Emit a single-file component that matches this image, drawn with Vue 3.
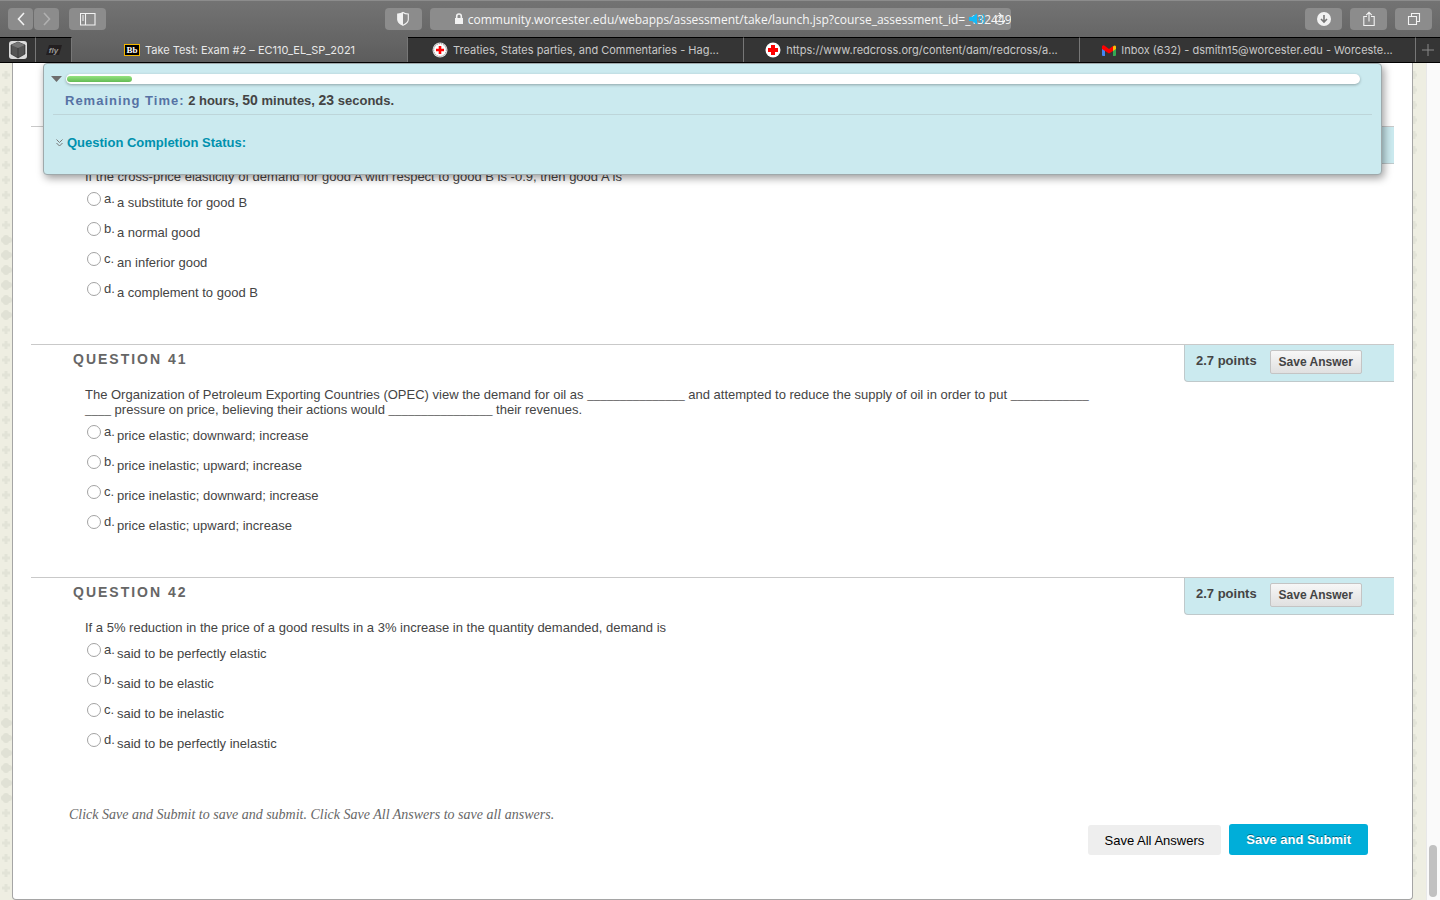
<script setup>
import { ref } from "vue";

const url = ref("community.worcester.edu/webapps/assessment/take/launch.jsp?course_assessment_id=_132449_1");
const answers = ref({});

const tabs = [
  { icon: "bb", title: "Take Test: Exam #2 – EC110_EL_SP_2021", active: true },
  { icon: "seal", title: "Treaties, States parties, and Commentaries - Hag..." },
  { icon: "cross", title: "https://www.redcross.org/content/dam/redcross/a..." },
  { icon: "gmail", title: "Inbox (632) - dsmith15@worcester.edu - Worceste..." },
];

// numbers in a prompt are blanks of that many underscores
const questions = [
  {
    number: 40,
    prompt: ["If the cross-price elasticity of demand for good A with respect to good B is -0.9, then good A is"],
    options: ["a substitute for good B", "a normal good", "an inferior good", "a complement to good B"],
  },
  {
    number: 41,
    prompt: [
      "The Organization of Petroleum Exporting Countries (OPEC) view the demand for oil as ",
      15,
      " and attempted to reduce the supply of oil in order to put ",
      12,
      4,
      " pressure on price, believing their actions would ",
      16,
      " their revenues.",
    ],
    options: [
      "price elastic; downward; increase",
      "price inelastic; upward; increase",
      "price inelastic; downward; increase",
      "price elastic; upward; increase",
    ],
  },
  {
    number: 42,
    prompt: ["If a 5% reduction in the price of a good results in a 3% increase in the quantity demanded, demand is"],
    options: [
      "said to be perfectly elastic",
      "said to be elastic",
      "said to be inelastic",
      "said to be perfectly inelastic",
    ],
  },
];

const letters = ["a", "b", "c", "d"];

// evenly spaced marks from one y to another
const run = (from, to) => {
  const list = [];
  for (let y = from; y <= to; y += 15) list.push(y);
  return list;
};

const leftSmall = [...run(12, 162), ...run(267, 477), ...run(495, 645), ...run(750, 825)];
const leftLarge = [...run(177, 252), ...run(660, 735)];
const rightSmall = [...run(12, 87), ...run(132, 312), ...run(403, 478), ...run(495, 570), ...run(615, 810)];
</script>

<template>
  <div class="window">
    <header class="toolbar">
      <div class="side">
        <div class="nav">
          <button class="tool small" aria-label="Back">
            <svg width="10" height="14" viewBox="0 0 10 14"><path d="M8 1 2.500 7 8 13" /></svg>
          </button>
          <button class="tool small dim" aria-label="Forward">
            <svg width="10" height="14" viewBox="0 0 10 14"><path d="M2 1 7.500 7 2 13" /></svg>
          </button>
        </div>
        <button class="tool" aria-label="Sidebar">
          <svg width="16" height="13" viewBox="0 0 16 13">
            <path class="thin" d="M.5.5h14.500v11.500H.5zM5.500.5v11.500M2 3h2M2 5h2M2 7h2" />
          </svg>
        </button>
      </div>
      <div class="middle">
        <button class="tool" aria-label="Privacy report">
          <svg width="14" height="16" viewBox="0 0 14 16">
            <path class="thin" d="M7 1.500C5.500 2.700 3.500 3 1.700 3v5.500c0 2.800 2.500 4.500 5.300 5.800 2.800-1.300 5.300-3 5.300-5.800V3C10.500 3 8.500 2.700 7 1.500z" />
            <path class="solid" d="M7 1.500v12.800C4.200 13 1.700 11.300 1.700 8.500V3C3.500 3 5.500 2.700 7 1.500z" />
          </svg>
        </button>
        <div class="address">
          <svg class="lock" width="10" height="12" viewBox="0 0 10 12">
            <path class="solid" d="M1 5h8v6H1z" />
            <path d="M2.700 5.500V3.300a2.300 2.300 0 0 1 4.600 0v2.200" />
          </svg>
          <input v-model="url" type="text" aria-label="Address" />
          <svg class="sound" width="18" height="12" viewBox="0 0 18 12">
            <path d="M1 4h3l5-3.500v11L4 8H1z" fill="#14baf7" stroke="none" />
            <path class="wave" d="M11 4q1.500 2 0 4M13 2.500q2.500 3.500 0 7M15 1q3.500 5 0 10" />
          </svg>
          <svg class="reload" width="12" height="14" viewBox="0 0 12 14">
            <path class="thin" d="M7 3.500H6a4.500 4.500 0 1 0 4.500 4.500M5 1l2.500 2.500L5 6" />
          </svg>
        </div>
      </div>
      <div class="side end">
        <button class="tool" aria-label="Downloads">
          <svg width="14" height="14" viewBox="0 0 14 14">
            <circle class="solid" cx="7" cy="7" r="7" />
            <path class="cut" d="M7 3v7M4 7l3 3 3-3" />
          </svg>
        </button>
        <button class="tool" aria-label="Share">
          <svg width="12" height="16" viewBox="0 0 12 16">
            <path class="thin" d="M4 5.500H.8v9h10.400v-9H8M6 10.500V1.500M3.200 4.200 6 1.400l2.800 2.800" />
          </svg>
        </button>
        <button class="tool" aria-label="Tab overview">
          <svg width="14" height="14" viewBox="0 0 14 14">
            <path class="thin" d="M1.500 4.500h8v8h-8zM4.500 4V1.500h8v8H10" />
          </svg>
        </button>
      </div>
    </header>

    <nav class="tabs">
      <button class="pin" aria-label="Cube">
        <svg width="18" height="18" viewBox="0 0 18 18">
          <rect width="18" height="18" rx="3" fill="#dcdcdc" />
          <path d="M9 1 16 4v9l-7 4-7-4V4z" fill="#555" stroke="#222" stroke-width=".6" />
          <path d="M2 4l7 3 7-3-7-3z" fill="#777" />
          <path d="M9 7v10" stroke="#333" stroke-width=".8" />
        </svg>
      </button>
      <button class="pin" aria-label="fly">
        <svg width="16" height="12" viewBox="0 0 16 12"><path d="M3 1h13l-3 10H0z" fill="#231f20" /></svg>
        <span class="fly">fly</span>
      </button>
      <button v-for="tab in tabs" :key="tab.title" class="tab" :class="{ active: tab.active }">
        <span v-if="tab.icon === 'bb'" class="bb">Bb</span>
        <svg v-else-if="tab.icon === 'seal'" width="16" height="16" viewBox="0 0 16 16">
          <circle cx="8" cy="8" r="7.500" fill="#ddd" />
          <circle cx="8" cy="8" r="6.300" fill="#fff" stroke="#888" stroke-dasharray="1 1" />
          <path d="M8 4v8M4 8h8" stroke="#f00" stroke-width="2.600" />
        </svg>
        <svg v-else-if="tab.icon === 'cross'" width="16" height="16" viewBox="0 0 16 16">
          <circle cx="8" cy="8" r="7.500" fill="#fff" />
          <path d="M8 3v10M3 8h10" stroke="#f00" stroke-width="4" />
        </svg>
        <svg v-else width="14" height="11" viewBox="0 0 14 11">
          <path d="M0 2h3v9H1q-1 0-1-1z" fill="#4285f4" />
          <path d="M11 2h3v8q0 1-1 1h-2z" fill="#34a853" />
          <path d="M11 1.500q2-2 3 0V4l-3 2z" fill="#fbbc04" />
          <path d="M0 1.500q1-2 3-.5l4 3 4-3v5L7 8.500 0 4z" fill="#f00" />
        </svg>
        <span class="tab-title">{{ tab.title }}</span>
      </button>
      <button class="plus" aria-label="New tab">
        <svg width="12" height="12" viewBox="0 0 12 12"><path d="M6 0v12M0 6h12" stroke="#8a8a8a" /></svg>
      </button>
    </nav>

    <div class="viewport">
      <svg class="gutter left">
        <path v-for="y in leftSmall" :key="y" class="mark" :d="`M6 ${y - 4}v8M2 ${y}h8`" />
        <g v-for="y in leftLarge" :key="'l' + y" class="blob">
          <rect x="3" :y="y - 5" width="6" height="10" rx="3" />
          <rect x="1" :y="y - 3" width="11" height="6" rx="3" />
        </g>
      </svg>

      <main class="sheet">
        <form @submit.prevent>
          <section v-for="q in questions" :key="q.number" class="question">
            <div class="head">
              <h3>QUESTION {{ q.number }}</h3>
              <div class="points">
                <span>2.7 points</span>
                <button type="button" class="save">Save Answer</button>
              </div>
            </div>
            <p class="prompt">
              <template v-for="(part, i) in q.prompt" :key="i">
                <span v-if="typeof part === 'number'" class="blank">{{ "_".repeat(part) }}</span>
                <template v-else>{{ part }}</template>
              </template>
            </p>
            <div class="options">
              <label v-for="(option, i) in q.options" :key="option" class="option">
                <input v-model="answers[q.number]" type="radio" :name="'q' + q.number" :value="letters[i]" />
                <span class="letter">{{ letters[i] }}.</span>
                <span class="text">{{ option }}</span>
              </label>
            </div>
          </section>

          <p class="hint">Click Save and Submit to save and submit. Click Save All Answers to save all answers.</p>
          <div class="actions">
            <button type="button" class="save-all">Save All Answers</button>
            <button type="submit" class="submit">Save and Submit</button>
          </div>
        </form>
      </main>

      <svg class="gutter right">
        <path v-for="y in rightSmall" :key="y" class="mark" :d="`M1 ${y - 4}v8M0 ${y}h4`" />
      </svg>
      <div class="scrollbar"><div class="thumb"></div></div>

      <aside class="status">
        <div class="timer">
          <svg class="arrow" width="11" height="6" viewBox="0 0 11 6"><path d="M0 0h11L5.500 6z" fill="#6d6d6d" /></svg>
          <div class="track"><div class="fill"></div></div>
        </div>
        <p class="time">
          <span class="time-label">Remaining Time:</span>
          2 hours, <b>50</b> minutes, <b>23</b> seconds.
        </p>
        <a href="#" class="completion">
          <svg width="7" height="8" viewBox="0 0 7 8">
            <path d="M.5.5l3 3 3-3M.5 4l3 3 3-3" fill="none" stroke="#777" />
          </svg>
          Question Completion Status:
        </a>
      </aside>
    </div>
  </div>
</template>

<style>
body {
  margin: 0;
}
</style>

<style scoped>
* {
  box-sizing: border-box;
}

.window {
  height: 100vh;
  display: flex;
  flex-direction: column;
  overflow: hidden;
  font-family: "Helvetica Neue", "Liberation Sans", Arial, sans-serif;
  font-size: 13px;
  line-height: 15px;
  color: #444;
}

button {
  font-family: inherit;
  border: none;
  padding: 0;
  cursor: pointer;
}

h3,
p {
  margin: 0;
}

/* browser toolbar */
.toolbar {
  display: flex;
  align-items: center;
  height: 37px;
  padding: 0 8px;
  background: linear-gradient(#737373, #666);
  border-top: 1px solid #8c8c8c;
}

.side {
  display: flex;
  flex: 1;
  gap: 10px;
}

.side.end {
  justify-content: flex-end;
  gap: 8px;
}

.nav {
  display: flex;
  gap: 1px;
}

.tool {
  display: flex;
  align-items: center;
  justify-content: center;
  width: 37px;
  height: 22px;
  border-radius: 4px;
  background: #8c8c8c;
}

.tool.small {
  width: 25px;
}

.toolbar svg {
  fill: none;
  stroke: #f2f2f2;
  stroke-width: 1.6;
}

.toolbar svg .thin {
  stroke-width: 1.1;
}

.toolbar svg .solid {
  fill: #f2f2f2;
  stroke: none;
}

.toolbar svg .cut {
  stroke: #777;
}

.toolbar svg .wave {
  stroke: #14baf7;
  stroke-width: 1;
}

.toolbar .dim svg {
  stroke: #b0b0b0;
}

.middle {
  display: flex;
  gap: 8px;
  width: 44%;
  margin-right: 44px;
}

.address {
  position: relative;
  flex: 1;
  display: flex;
  align-items: center;
  gap: 4px;
  height: 22px;
  padding-left: 24px;
  border-radius: 4px;
  background: #8c8c8c;
}

.address input {
  flex: 1;
  min-width: 0;
  height: 22px;
  padding: 0;
  border: none;
  outline: none;
  background: none;
  color: #f6f6f6;
  font: 500 12px "Open Sans", sans-serif;
}

.address .sound {
  position: absolute;
  right: 25px;
}

.address .reload {
  position: absolute;
  right: 5px;
}

/* tab bar */
.tabs {
  display: flex;
  height: 26px;
  background: #5f5f5f;
  border-bottom: 1px solid #000;
}

.tabs button {
  display: flex;
  align-items: center;
  justify-content: center;
  border-top: 1px solid #000;
  border-right: 1px solid #777;
  background: #353535;
}

.tabs .pin {
  position: relative;
  width: 36px;
}

.fly {
  position: absolute;
  color: #999;
  font: italic bold 8px "Liberation Sans", sans-serif;
}

.tabs .tab {
  flex: 1;
  min-width: 0;
  gap: 5px;
  color: #c8c8c8;
  font: 400 11px Inter, sans-serif;
}

.tabs .tab.active {
  background: linear-gradient(#666, #5c5c5c);
  border-top-color: #666;
  color: #e8e8e8;
}

.tab-title {
  overflow: hidden;
  white-space: nowrap;
}

.bb {
  width: 16px;
  height: 12px;
  border: 1px solid #f5b800;
  background: #000;
  color: #fff;
  font: bold 9px/10px "Liberation Serif", serif;
}

.tabs .plus {
  width: 24px;
  border-right: none;
}

/* page */
.viewport {
  position: relative;
  flex: 1;
  min-height: 0;
  display: flex;
  overflow: hidden;
  background: #eeeee2;
}

.gutter {
  flex: none;
  height: 100%;
}

.gutter.left {
  width: 12px;
}

.gutter.right {
  width: 13px;
}

.mark {
  stroke: #e2e3d7;
  stroke-width: 3;
}

.blob {
  fill: #e0e1d5;
}

.sheet {
  flex: 1;
  min-width: 0;
  padding: 63px 18px 0;
  background: #fff;
  border: 1px solid #a5a5a5;
  border-top: none;
  border-radius: 0 0 4px 4px;
}

.scrollbar {
  display: flex;
  flex-direction: column;
  justify-content: flex-end;
  align-items: center;
  width: 14px;
  padding: 0 2px 3px 0;
  background: #fafafa;
  border-left: 1px solid #e8e8e8;
}

.thumb {
  width: 8px;
  height: 52px;
  border-radius: 4px;
  background: #c1c1c1;
}

.question {
  padding-bottom: 32px;
  border-top: 1px solid #c9c9c9;
}

.head {
  display: flex;
  justify-content: space-between;
  height: 42px;
  padding-left: 42px;
}

.head h3 {
  padding-top: 6px;
  font-size: 14px;
  line-height: 16px;
  letter-spacing: 2px;
  color: #666;
}

.points {
  display: flex;
  gap: 13px;
  width: 210px;
  height: 37px;
  padding: 5px 0 0 11px;
  font-weight: bold;
  line-height: 22px;
  background: #cbeaef;
  border: solid #bfc9cb;
  border-width: 0 0 1px 1px;
  border-radius: 0 0 0 4px;
}

.save {
  width: 92px;
  height: 24px;
  border: 1px solid #c4c4c4;
  border-radius: 2px;
  background: linear-gradient(#f7f7f7, #e0e0e0);
  color: #444;
  font-size: 12px;
  font-weight: bold;
}

.prompt {
  padding: 0 302px 0 54px;
}

.blank {
  font-family: "Liberation Serif", serif;
  line-height: 13px;
  word-break: break-all;
}

.options {
  padding: 8px 0 0 56px;
}

.option {
  display: flex;
  align-items: flex-start;
  width: fit-content;
  height: 30px;
}

.option input {
  appearance: none;
  width: 14px;
  height: 14px;
  margin: 0 3px 0 0;
  border: 1px solid #a3a3a3;
  border-radius: 50%;
  background: #fff;
}

.option input:checked {
  border: 4px solid #1479f5;
}

.letter {
  width: 13px;
  line-height: 13px;
  white-space: nowrap;
}

.text {
  padding-top: 3px;
}

.hint {
  padding: 11px 0 0 38px;
  color: #666;
  font: italic 14px/18px Georgia, "Liberation Serif", serif;
}

.actions {
  display: flex;
  justify-content: flex-end;
  align-items: flex-end;
  gap: 8px;
  padding-right: 26px;
}

.actions button {
  padding: 0 17px;
  border-radius: 3px;
  font-size: 13px;
}

.actions .save-all {
  height: 30px;
  background: #eee;
  color: #000;
}

.actions .submit {
  height: 31px;
  background: #00aed9;
  color: #fff;
  font-weight: bold;
  text-shadow: 0 -1px 0 rgba(0, 0, 0, 0.4);
}

/* floating timer panel */
.status {
  position: absolute;
  top: 0;
  left: 43px;
  right: 58px;
  height: 112px;
  padding: 10px 9px 0 7px;
  background: #cbeaef;
  border: 1px solid #9fa9ab;
  border-radius: 4px;
  box-shadow: 2px 3px 8px rgba(0, 0, 0, 0.4);
}

.timer {
  display: flex;
  align-items: center;
  gap: 4px;
  padding-right: 12px;
}

.track {
  flex: 1;
  height: 10px;
  padding: 2px 1px;
  border-radius: 5px;
  background: #fff;
  box-shadow: 0 1px 3px rgba(0, 0, 0, 0.3);
}

.fill {
  width: 5%;
  height: 6px;
  border-radius: 3px;
  background: linear-gradient(#94e27f, #63bb55);
}

.time {
  padding: 8px 0 5px 12px;
  margin-left: 2px;
  border-bottom: 1px solid #bdd5d9;
  font-weight: bold;
  line-height: 16px;
}

.time b {
  font-size: 14px;
}

.time-label {
  color: #5672a4;
  letter-spacing: 1px;
}

.completion {
  display: flex;
  align-items: center;
  gap: 4px;
  padding: 20px 0 0 5px;
  color: #0091ae;
  font-weight: bold;
  text-decoration: none;
}
</style>
